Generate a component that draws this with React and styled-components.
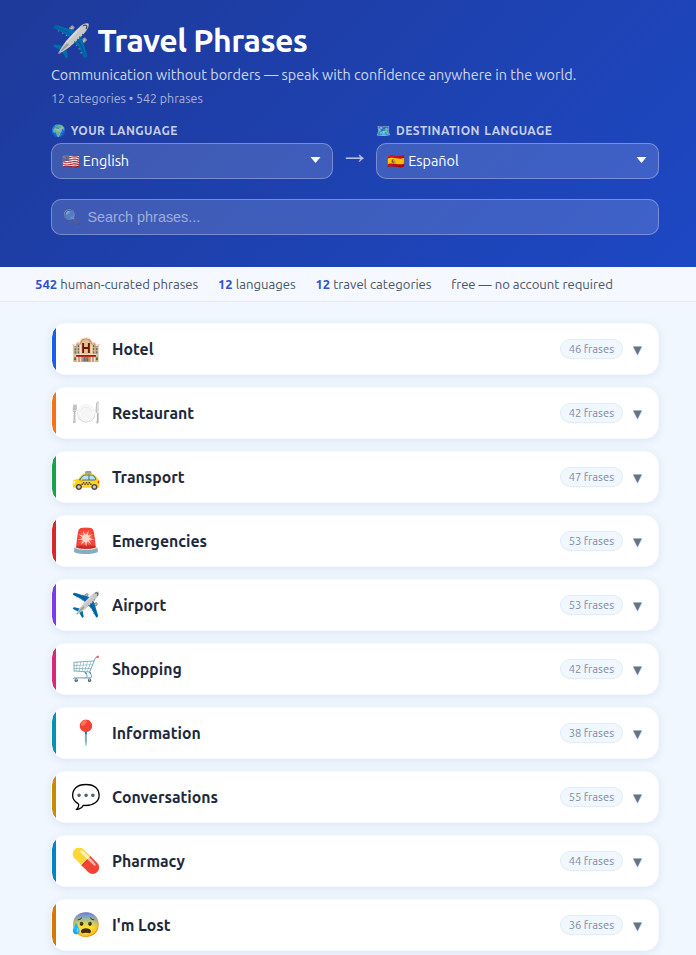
import React from "react";
import styled, { createGlobalStyle } from "styled-components";

const Global = createGlobalStyle`
  * { box-sizing: border-box; }
  html, body { margin: 0; padding: 0; background: #f0f7ff; overflow-x: hidden; }
  body { font-family: Ubuntu, "Noto Sans", "Open Sans", sans-serif; }
`;

const Header = styled.header`
  height: 267px;
  padding: 20px 37.3px 32px 51px;
  background: linear-gradient(135deg, #1e3a9a 0%, #1d48c4 100%);
  color: #fff;
`;
const Title = styled.h1`
  margin: 0;
  font-size: 32px;
  line-height: 40px;
  font-weight: 700;
  letter-spacing: -0.55px;
`;
const Subtitle = styled.p`
  margin: 5px 0 0;
  font-size: 14.4px;
  line-height: 20px;
  color: rgba(255, 255, 255, 0.8);
`;
const Meta = styled.p`
  margin: 5px 0 0;
  font-size: 12.4px;
  line-height: 16px;
  color: rgba(255, 255, 255, 0.6);
`;
const LangRow = styled.div`
  display: flex;
  align-items: flex-end;
  gap: 10px;
  margin-top: 17px;
`;
const LangField = styled.div`
  flex: 1;
  display: flex;
  flex-direction: column;
  gap: 4px;
`;
const LangLabel = styled.div`
  font-size: 12px;
  line-height: 16px;
  font-weight: 700;
  letter-spacing: 0.44px;
  word-spacing: 1px;
  text-transform: uppercase;
  color: rgba(255, 255, 255, 0.75);
`;
const SelectBox = styled.div`
  height: 36px;
  display: flex;
  align-items: center;
  justify-content: space-between;
  padding: 0 11px 0 10px;
  border: 1px solid rgba(255, 255, 255, 0.3);
  border-radius: 10px;
  background: rgba(255, 255, 255, 0.15);
  font-size: 14.4px;
  word-spacing: -0.5px;
  color: #fff;
`;
const CaretIcon = styled.svg`
  width: 11px;
  height: 6px;
  margin-top: -2px;
`;
const Arrow = styled.div`
  width: 23px;
  height: 36px;
  padding-bottom: 17px;
  display: flex;
  align-items: center;
  justify-content: center;
  font-size: 30px;
  color: rgba(255, 255, 255, 0.7);
`;
const SearchBox = styled.div`
  height: 36px;
  margin-top: 20px;
  display: flex;
  align-items: center;
  gap: 6.5px;
  padding: 0 11px;
  border: 1px solid rgba(255, 255, 255, 0.3);
  border-radius: 10px;
  background: rgba(255, 255, 255, 0.15);
  font-family: "Liberation Sans", Arial, sans-serif;
  font-size: 14.4px;
  color: rgba(255, 255, 255, 0.5);
`;
const TrustBar = styled.div`
  height: 35px;
  display: flex;
  align-items: center;
  gap: 19.7px;
  padding: 0 35px;
  background: #f5f8fe;
  border-bottom: 1px solid #e2e8f0;
  font-size: 13.12px;
  color: #475569;
  white-space: nowrap;
`;
const Strong = styled.strong`
  color: #2f50d0;
`;
const List = styled.main`
  display: flex;
  flex-direction: column;
  gap: 12px;
  padding: 21px 37.5px 4px 51px;
`;
const Card = styled.div`
  height: 52px;
  display: flex;
  align-items: center;
  padding: 0 15.5px 0 19px;
  border: 1px solid #f8fafd;
  border-radius: 14px;
  background: linear-gradient(${(p) => p.$accent}, ${(p) => p.$accent}) left / 4px 100% no-repeat padding-box, #fff;
  box-shadow: 0 2px 10px rgba(30, 58, 138, 0.09);
`;
const CardIcon = styled.span`
  width: 30px;
  margin-right: 11px;
  text-align: center;
  font-size: 24px;
  line-height: 30px;
`;
const CardName = styled.span`
  flex: 1;
  font-size: 15.84px;
  font-weight: 700;
  color: #1e293b;
`;
const Count = styled.span`
  padding: 2px 8px;
  border: 1px solid #e2ecf6;
  border-radius: 10px;
  background: #f0f7ff;
  font-size: 11.2px;
  line-height: 14px;
  color: #7c8ba1;
`;
const Chevron = styled.span`
  width: 12px;
  margin-left: 7px;
  font-size: 15px;
  text-align: center;
  color: #64748b;
`;
const Caret = () => (
  <CaretIcon viewBox="0 0 11 6"><path d="M0.5 0h10L5.5 6z" fill="#fff" /></CaretIcon>
);

const categories = [
  ["🏨", "Hotel", 46, "#1d5cf0"],
  ["🍽️", "Restaurant", 42, "#f97316"],
  ["🚕", "Transport", 47, "#16a34a"],
  ["🚨", "Emergencies", 53, "#dc2626"],
  ["✈️", "Airport", 53, "#7c3aed"],
  ["🛒", "Shopping", 42, "#db2777"],
  ["📍", "Information", 38, "#0891b2"],
  ["💬", "Conversations", 55, "#ca8a04"],
  ["💊", "Pharmacy", 44, "#0284c7"],
  ["😰", "I'm Lost", 36, "#d97706"],
];

export default function App() {
  return (
    <>
      <Global />
      <Header>
        <Title>✈️ Travel Phrases</Title>
        <Subtitle>Communication without borders — speak with confidence anywhere in the world.</Subtitle>
        <Meta>12 categories • 542 phrases</Meta>
        <LangRow>
          <LangField>
            <LangLabel>🌍 Your language</LangLabel>
            <SelectBox><span>🇺🇸 English</span><Caret /></SelectBox>
          </LangField>
          <Arrow>→</Arrow>
          <LangField>
            <LangLabel>🗺️ Destination language</LangLabel>
            <SelectBox><span>🇪🇸 Español</span><Caret /></SelectBox>
          </LangField>
        </LangRow>
        <SearchBox><span>🔍</span><span>Search phrases...</span></SearchBox>
      </Header>
      <TrustBar>
        <span><Strong>542</Strong> human-curated phrases</span>
        <span><Strong>12</Strong> languages</span>
        <span><Strong>12</Strong> travel categories</span>
        <span>free — no account required</span>
      </TrustBar>
      <List>
        {categories.map(([icon, name, n, accent]) => (
          <Card key={name} $accent={accent}>
            <CardIcon>{icon}</CardIcon>
            <CardName>{name}</CardName>
            <Count>{n} frases</Count>
            <Chevron>▼</Chevron>
          </Card>
        ))}
      </List>
    </>
  );
}
